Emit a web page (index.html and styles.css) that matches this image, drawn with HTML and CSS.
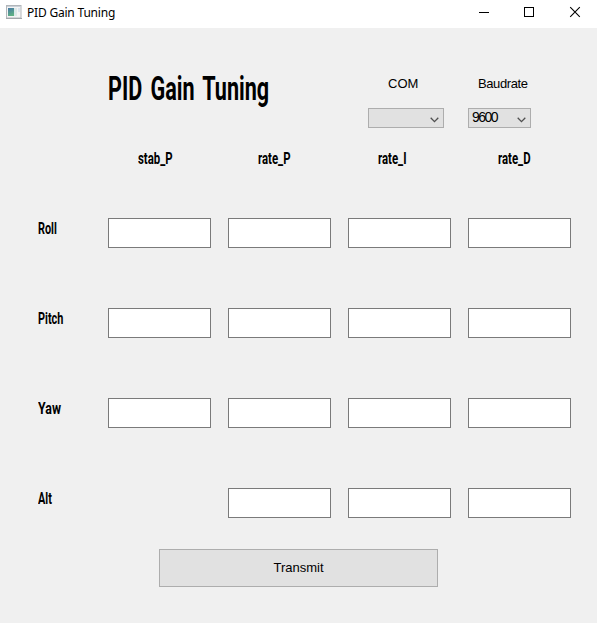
FILE: index.html
```html
<!DOCTYPE html>
<html lang="en">
<head>
<meta charset="utf-8">
<title>PID Gain Tuning</title>
<link rel="stylesheet" href="styles.css">
</head>
<body>
<header class="titlebar">
  <svg class="app-icon" width="16" height="14" viewBox="0 0 16 14">
    <defs><linearGradient id="g" x1="0" y1="0" x2="0.4" y2="1"><stop offset="0" stop-color="#4778a5"/><stop offset="1" stop-color="#5fb184"/></linearGradient></defs>
    <rect x="0.5" y="0.5" width="14.5" height="12.5" fill="#f4f4f4" stroke="#b2b6ba"/>
    <path d="M1 1.5h14" stroke="#c9d0d8"/>
    <rect x="2" y="3" width="7" height="8" fill="url(#g)"/>
    <rect x="8" y="3" width="3" height="8" fill="#dce9e8"/>
    <rect x="12" y="3" width="2" height="4" fill="#dae4ed"/>
    <path d="M0 13.5h16" stroke="#a3a7ab"/>
  </svg>
  <span class="window-title">PID Gain Tuning</span>
  <svg class="controls" width="104" height="12" viewBox="0 0 104 12" fill="none" stroke="#000">
    <path d="M1 6.5h10"/>
    <rect x="46.5" y="1.5" width="9" height="9"/>
    <path d="M92.2 1.2l9.6 9.6M101.8 1.2l-9.6 9.6" stroke-width="1.1"/>
  </svg>
</header>
<main>
  <section class="top">
    <h1><span class="squeeze">PID Gain Tuning</span></h1>
    <div class="port com">
      <label>COM</label>
      <div class="combo"><span></span><svg width="9" height="6" viewBox="0 0 9 6"><path d="M.7 .8l3.8 3.8L8.3 .8"/></svg></div>
    </div>
    <div class="port baud">
      <label>Baudrate</label>
      <div class="combo"><span class="value">9600</span><svg width="9" height="6" viewBox="0 0 9 6"><path d="M.7 .8l3.8 3.8L8.3 .8"/></svg></div>
    </div>
  </section>
  <section class="gains heads">
    <b></b><b class="squeeze">stab_P</b><b class="squeeze">rate_P</b><b class="squeeze">rate_I</b><b class="squeeze">rate_D</b>
  </section>
  <section class="gains fields">
    <b class="squeeze">Roll</b><input><input><input><input>
    <b class="squeeze">Pitch</b><input><input><input><input>
    <b class="squeeze yaw">Yaw</b><input><input><input><input>
    <b class="squeeze">Alt</b><i></i><input><input><input>
  </section>
  <button>Transmit</button>
</main>
</body>
</html>
```
FILE: styles.css
```css
* { box-sizing: border-box; }
body { margin: 0; height: 623px; overflow: hidden; background: #f0f0f0; color: #000; font: 12px "Liberation Sans", sans-serif; }
.titlebar { display: flex; align-items: center; height: 28px; padding: 0 15px 4px 6px; background: #fff; }
.window-title { margin: 2px 0 0 5px; font: 12px/16px "Noto Sans", sans-serif; letter-spacing: -0.2px; }
.controls { margin-left: auto; }
.squeeze { display: block; width: max-content; font-family: Roboto, sans-serif; font-weight: 700; transform: scaleX(.66); transform-origin: 0 50%; white-space: nowrap; }
.top { display: grid; grid-template-columns: 260px 100px 63px; height: 120px; padding-left: 108px; }
h1 { margin: 40px 0 0; font-size: 34px; line-height: 40px; }
h1 .squeeze { transform: scaleX(.635); word-spacing: 4.5px; }
.port { padding-top: 48px; }
.port label { display: block; height: 16px; margin: 0 0 16px 20px; font-size: 13px; line-height: 16px; white-space: nowrap; }
.baud label { margin-left: 10px; letter-spacing: -0.4px; }
.combo { display: flex; align-items: center; justify-content: space-between; height: 20px; padding: 0 4px; border: 1px solid #adadad; background: #e1e1e1; }
.com .combo { width: 76px; }
.combo svg { margin-top: 3px; fill: none; stroke: #505050; stroke-width: 1.3; }
.value { margin: -2px 0 0 -1px; font-size: 14px; line-height: 16px; letter-spacing: -1.5px; }
.gains { display: grid; grid-template-columns: 53px repeat(4, 103px); column-gap: 17px; padding-left: 38px; font-size: 16.5px; line-height: 20px; }
.heads { height: 70px; padding-top: 1px; }
.heads .squeeze { margin-left: 30px; transform: scaleX(.69); }
.fields { grid-auto-rows: 30px; row-gap: 60px; }
.fields .squeeze { margin-top: 1px; }
.fields .yaw { transform: scaleX(.75); }
input { width: 103px; height: 30px; margin: 0; padding: 0 4px; border: 1px solid #7a7a7a; border-radius: 0; background: #fff; }
button { display: block; width: 279px; height: 38px; margin: 31px 0 0 159px; padding: 0 0 2px; border: 1px solid #adadad; border-radius: 0; background: #e1e1e1; color: #000; font: 13px "Liberation Sans", sans-serif; }
```
